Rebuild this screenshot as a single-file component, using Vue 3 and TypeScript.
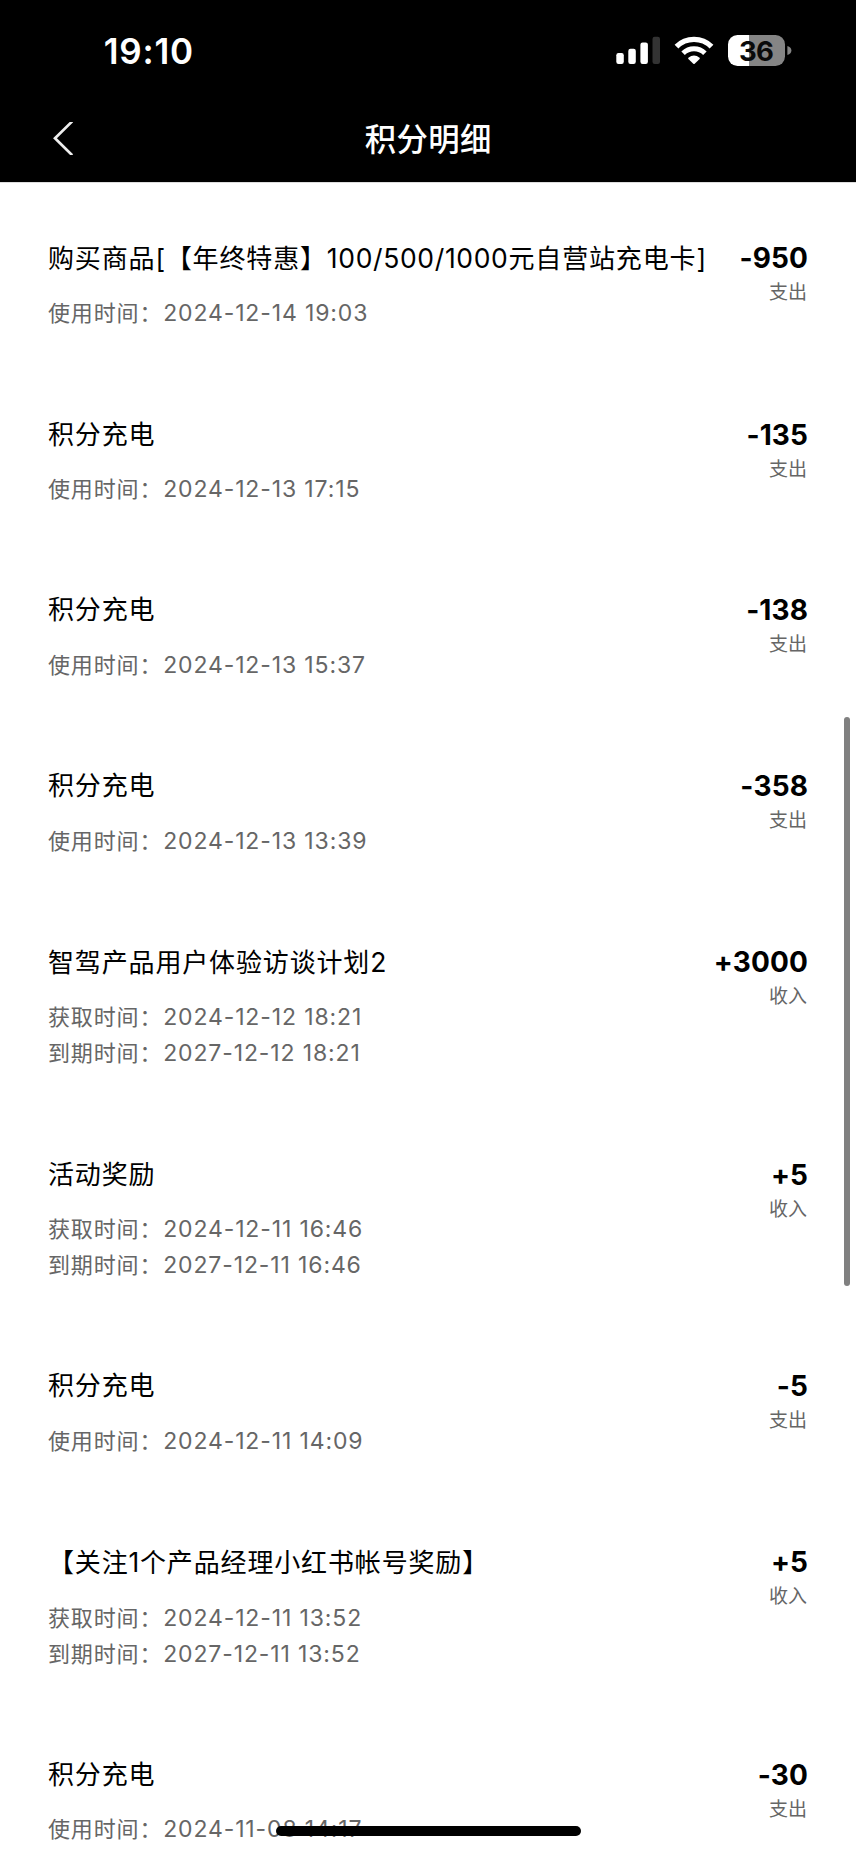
<script setup lang="ts">
interface TimeLine {
  label: string
  value: string
}

interface PointRecord {
  title: string
  amount: number
  times: TimeLine[]
}

interface TextRun {
  text: string
  latin: boolean
}

const used = (value: string): TimeLine[] => [{ label: '使用时间：', value }]
const earned = (from: string, until: string): TimeLine[] => [
  { label: '获取时间：', value: from },
  { label: '到期时间：', value: until },
]

const records: PointRecord[] = [
  { title: '购买商品[【年终特惠】100/500/1000元自营站充电卡]', amount: -950, times: used('2024-12-14 19:03') },
  { title: '积分充电', amount: -135, times: used('2024-12-13 17:15') },
  { title: '积分充电', amount: -138, times: used('2024-12-13 15:37') },
  { title: '积分充电', amount: -358, times: used('2024-12-13 13:39') },
  { title: '智驾产品用户体验访谈计划2', amount: 3000, times: earned('2024-12-12 18:21', '2027-12-12 18:21') },
  { title: '活动奖励', amount: 5, times: earned('2024-12-11 16:46', '2027-12-11 16:46') },
  { title: '积分充电', amount: -5, times: used('2024-12-11 14:09') },
  { title: '【关注1个产品经理小红书帐号奖励】', amount: 5, times: earned('2024-12-11 13:52', '2027-12-11 13:52') },
  { title: '积分充电', amount: -30, times: used('2024-11-08 14:17') },
]

const signed = (n: number): string => (n > 0 ? `+${n}` : `${n}`)
const kind = (n: number): string => (n > 0 ? '收入' : '支出')

// Latin runs use slightly different tracking than Chinese ones.
const runs = (text: string): TextRun[] =>
  (text.match(/[\x20-\x7e]+|[^\x20-\x7e]+/g) ?? []).map((t) => ({
    text: t,
    latin: /^[\x20-\x7e]/.test(t),
  }))
</script>

<template>
  <div class="screen">
    <header class="top">
      <div class="status">
        <span class="clock">19:10</span>
        <div class="indicators">
          <svg class="signal" width="44" height="28" viewBox="0 0 44 28">
            <rect x="0.3" y="17" width="7.5" height="11" rx="2.2" fill="#fff" />
            <rect x="12.3" y="12.8" width="7.5" height="15.2" rx="2.2" fill="#fff" />
            <rect x="24.4" y="6.5" width="7.5" height="21.5" rx="2.2" fill="#fff" />
            <rect x="36.5" y="0.7" width="7.5" height="27.3" rx="2.2" fill="#333" />
          </svg>
          <svg class="wifi" width="40" height="29" viewBox="0 0 40 29">
            <g fill="none" stroke="#fff">
              <path d="M2.5 10.6 A24.9 24.9 0 0 1 37.5 10.6" stroke-width="5.4" />
              <path d="M9.1 17.3 A15.6 15.6 0 0 1 30.9 17.3" stroke-width="5" />
            </g>
            <path
              d="M14.4 21.7 Q20 17.3 25.6 21.7 Q26.2 22.3 25.6 22.9 L20.7 27.8 Q20 28.4 19.3 27.8 L14.4 22.9 Q13.8 22.3 14.4 21.7 Z"
              fill="#fff"
            />
          </svg>
          <div class="battery">
            <div class="cell"><span class="level">36</span></div>
            <svg width="5" height="9" viewBox="0 0 5 9">
              <path d="M0.4 0 Q4.4 1.2 4.4 4.5 Q4.4 7.8 0.4 9 Z" fill="#858585" />
            </svg>
          </div>
        </div>
      </div>
      <nav class="nav">
        <svg class="back" width="22" height="33" viewBox="0 0 22 33">
          <path d="M20.2 -0.6 L3 16.3 L20.2 33.2" fill="none" stroke="#eee" stroke-width="2.7" />
        </svg>
        <h1>积分明细</h1>
      </nav>
    </header>

    <main class="list">
      <article v-for="(r, i) in records" :key="i" class="item">
        <div class="info">
          <h2>
            <span v-for="(run, k) in runs(r.title)" :key="k" :class="{ latin: run.latin }">{{ run.text }}</span>
          </h2>
          <p v-for="t in r.times" :key="t.label">
            <span class="label">{{ t.label }}</span><span class="date">{{ t.value }}</span>
          </p>
        </div>
        <div class="side">
          <strong>{{ signed(r.amount) }}</strong>
          <small>{{ kind(r.amount) }}</small>
        </div>
      </article>
    </main>

    <div class="scrollbar"></div>
    <div class="home"></div>
  </div>
</template>

<style>
html,
body {
  margin: 0;
  background: #fff;
}
</style>

<style scoped>
.screen {
  position: relative;
  box-sizing: border-box;
  width: 856px;
  height: 1852px;
  overflow: hidden;
  background: #fff;
  color: #000;
  font-family: Inter, 'Noto Sans CJK SC', sans-serif;
  text-spacing-trim: space-all;
}
.top {
  height: 182px;
  background: #000;
  color: #fff;
  border-bottom: 1px solid #ddd;
  box-sizing: content-box;
  margin-bottom: -1px;
}
.status {
  display: flex;
  justify-content: space-between;
  height: 98px;
  padding: 0 64px 0 103.7px;
}
.clock {
  margin-top: 31px;
  font-size: 35px;
  line-height: 40px;
  font-weight: 600;
  letter-spacing: 0.8px;
}
.indicators {
  display: flex;
  align-items: flex-start;
}
.signal {
  margin-top: 36px;
}
.wifi {
  margin: 36px 0 0 14px;
}
.battery {
  display: flex;
  align-items: center;
  margin: 35px 0 0 14px;
}
.cell {
  width: 57px;
  height: 31px;
  border-radius: 9.5px;
  background: linear-gradient(90deg, #fff 21.2px, #858585 21.2px);
  text-align: center;
}
.battery svg {
  margin-left: 2px;
}
.level {
  display: block;
  margin-left: -1px;
  color: #0a0a0a;
  font-size: 27.5px;
  line-height: 32px;
  font-weight: 650;
  letter-spacing: -0.9px;
}
.nav {
  display: flex;
  align-items: center;
  height: 84px;
}
.back {
  margin: -3px 0 0 52px;
}
h1 {
  flex: 1;
  margin: 0 73.5px 0 0;
  text-align: center;
  font-size: 31.4px;
  line-height: 84px;
  font-weight: 500;
  letter-spacing: 0.3px;
}
.item {
  display: flex;
  justify-content: space-between;
  padding: 57.75px 48px 27.5px;
}
h2 {
  margin: 0 0 18.5px;
  font-size: 26px;
  line-height: 36px;
  font-weight: 400;
  letter-spacing: 0.85px;
  white-space: nowrap;
}
.latin {
  font-size: 26.5px;
  letter-spacing: 0.65px;
}
p {
  margin: 0;
  color: #666;
  font-size: 23px;
  line-height: 36px;
  white-space: nowrap;
}
.label {
  margin-right: 0.9px;
  font-size: 22px;
  letter-spacing: 0.85px;
}
.date {
  letter-spacing: 0.87px;
}
.side {
  display: flex;
  flex-direction: column;
  align-items: flex-end;
}
strong {
  font-size: 28px;
  line-height: 36px;
  font-weight: 700;
  font-kerning: none;
  letter-spacing: 0.1px;
}
small {
  margin: 4px 1px 0 0;
  color: #666;
  font-size: 19px;
  line-height: 26px;
}
.scrollbar {
  position: absolute;
  right: 6px;
  top: 717px;
  width: 6px;
  height: 569px;
  border-radius: 3px;
  background: #808080;
}
.home {
  position: absolute;
  left: 276px;
  bottom: 16px;
  width: 305px;
  height: 10px;
  border-radius: 5px;
  background: #000;
}
</style>
